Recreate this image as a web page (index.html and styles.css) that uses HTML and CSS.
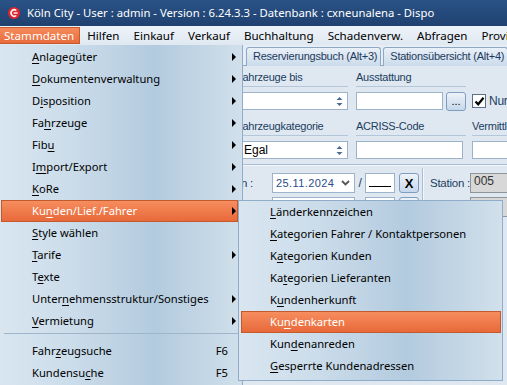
FILE: index.html
```html
<!DOCTYPE html>
<html lang="de">
<head>
    <meta charset="UTF-8">
    <meta name="viewport" content="width=device-width, initial-scale=1.0">
    <title>Köln City - Dispo</title>
    <link rel="stylesheet" href="styles.css">
</head>
<body>
    <div class="window">
        <div class="titlebar">
            <svg class="app-icon" width="12" height="12" viewBox="0 0 12 12">
                <circle cx="6" cy="6" r="6" fill="#e1242c"/>
                <path d="M8.3 3.5 A3.2 3.2 0 1 0 8.3 8.5" fill="none" stroke="#fff" stroke-width="1.5"/>
                <path d="M5.6 6 H9.6" stroke="#fff" stroke-width="1.4"/>
            </svg>
            <span>Köln City - User : admin - Version : 6.24.3.3 - Datenbank : cxneunalena - Dispo</span>
        </div>

        <div class="menubar">
            <span class="menubar-item open">Stammdaten</span>
            <span class="menubar-item">Hilfen</span>
            <span class="menubar-item">Einkauf</span>
            <span class="menubar-item">Verkauf</span>
            <span class="menubar-item">Buchhaltung</span>
            <span class="menubar-item">Schadenverw.</span>
            <span class="menubar-item">Abfragen</span>
            <span class="menubar-item">Provisionen</span>
        </div>

        <div class="workspace">
            <div class="tabstrip">
                <span class="tab">Reservierungsbuch (Alt+3)</span>
                <span class="tab">Stationsübersicht (Alt+4)</span>
            </div>

            <div class="panel">
                <div class="field-row">
                    <div class="field col-a">
                        <div class="caption">Fahrzeuge bis</div>
                        <div class="input select">
                            <span></span>
                            <svg class="spin" width="7" height="11" viewBox="0 0 7 11"><path d="M0.5 4 L3.5 1 L6.5 4 Z M0.5 7 L3.5 10 L6.5 7 Z" fill="#4d6b8c"/></svg>
                        </div>
                    </div>
                    <div class="field col-b">
                        <div class="caption">Ausstattung</div>
                        <div class="inline">
                            <div class="input w-88"></div>
                            <span class="btn dots">...</span>
                        </div>
                    </div>
                    <div class="field col-c">
                        <div class="caption no-line"></div>
                        <div class="check">
                            <span class="check-box">
                                <svg width="11" height="11" viewBox="0 0 11 11"><path d="M1.5 5.5 L4.2 8.3 L9.5 1.8" fill="none" stroke="#000" stroke-width="2.2"/></svg>
                            </span>
                            Nur verfügbare
                        </div>
                    </div>
                </div>

                <div class="field-row">
                    <div class="field col-a">
                        <div class="caption">Fahrzeugkategorie</div>
                        <div class="input select">
                            <span>Egal</span>
                            <svg class="spin" width="7" height="11" viewBox="0 0 7 11"><path d="M0.5 4 L3.5 1 L6.5 4 Z M0.5 7 L3.5 10 L6.5 7 Z" fill="#4d6b8c"/></svg>
                        </div>
                    </div>
                    <div class="field col-b">
                        <div class="caption">ACRISS-Code</div>
                        <div class="input w-107"></div>
                    </div>
                    <div class="field col-c">
                        <div class="caption">Vermittler</div>
                        <div class="input"></div>
                    </div>
                </div>

                <div class="divider"></div>

                <div class="date-block">
                    <div class="date-fields">
                        <div class="date-row">
                            <span class="date-label">Datum von :</span>
                            <div class="input date">
                                <span>25.11.2024</span>
                                <svg width="9" height="6" viewBox="0 0 9 6"><path d="M1 1 L4.5 4.5 L8 1" fill="none" stroke="#555" stroke-width="1.8"/></svg>
                            </div>
                            <span class="slash">/</span>
                            <div class="input time"><span class="blank-line"></span></div>
                            <span class="btn clear">X</span>
                        </div>
                        <div class="date-row">
                            <span class="date-label"></span>
                            <div class="input date"></div>
                            <span class="slash"></span>
                            <div class="input time"></div>
                            <span class="btn clear"></span>
                        </div>
                    </div>
                    <div class="vsep"></div>
                    <div class="station-fields">
                        <div class="date-row">
                            <span class="station-label">Station :</span>
                            <div class="input readonly">005</div>
                        </div>
                        <div class="date-row">
                            <span class="station-label"></span>
                            <div class="input readonly"></div>
                        </div>
                    </div>
                </div>
            </div>
        </div>

        <div class="menu main-menu">
            <div class="menu-item sub"><span class="label"><u>A</u>nlagegüter</span></div>
            <div class="menu-item sub"><span class="label"><u>D</u>okumentenverwaltung</span></div>
            <div class="menu-item sub"><span class="label">D<u>i</u>sposition</span></div>
            <div class="menu-item sub"><span class="label">Fa<u>h</u>rzeuge</span></div>
            <div class="menu-item sub"><span class="label">Fib<u>u</u></span></div>
            <div class="menu-item sub"><span class="label">I<u>m</u>port/Export</span></div>
            <div class="menu-item sub"><span class="label"><u>K</u>oRe</span></div>
            <div class="menu-item sub active"><span class="label">Ku<u>n</u>den/Lief./Fahrer</span></div>
            <div class="menu-item"><span class="label"><u>S</u>tyle wählen</span></div>
            <div class="menu-item sub"><span class="label"><u>T</u>arife</span></div>
            <div class="menu-item"><span class="label">T<u>e</u>xte</span></div>
            <div class="menu-item sub"><span class="label">Unter<u>n</u>ehmensstruktur/Sonstiges</span></div>
            <div class="menu-item sub"><span class="label"><u>V</u>ermietung</span></div>
            <div class="menu-sep"></div>
            <div class="menu-item"><span class="label">Fahr<u>z</u>eugsuche</span><span class="key">F6</span></div>
            <div class="menu-item"><span class="label">Kundensu<u>c</u>he</span><span class="key">F5</span></div>
        </div>

        <div class="menu sub-menu">
            <div class="menu-item"><span class="label"><u>L</u>änderkennzeichen</span></div>
            <div class="menu-item"><span class="label"><u>K</u>ategorien Fahrer / Kontaktpersonen</span></div>
            <div class="menu-item"><span class="label">K<u>a</u>tegorien Kunden</span></div>
            <div class="menu-item"><span class="label">Ka<u>t</u>egorien Lieferanten</span></div>
            <div class="menu-item"><span class="label">K<u>u</u>ndenherkunft</span></div>
            <div class="menu-item active"><span class="label">Ku<u>n</u>denkarten</span></div>
            <div class="menu-item"><span class="label">Kun<u>d</u>enanreden</span></div>
            <div class="menu-item"><span class="label"><u>G</u>esperrte Kundenadressen</span></div>
        </div>
    </div>
</body>
</html>
```

FILE: styles.css
```css
* {
    box-sizing: border-box;
}
body {
    margin: 0;
    font-family: "Noto Sans", "Open Sans", sans-serif;
    font-size: 12px;
    color: #000;
}
.window {
    position: relative;
    width: 507px;
    height: 385px;
    overflow: hidden;
    background: #dce6f0;
}

/* title + menu bar */
.titlebar {
    display: flex;
    align-items: center;
    gap: 7px;
    height: 26px;
    padding: 0 0 1px 8px;
    background: linear-gradient(#2a5386, #1f4170);
    color: #fff;
    font-size: 11.3px;
    white-space: nowrap;
}
.app-icon {
    flex: none;
}
.menubar {
    display: flex;
    height: 19px;
    margin-left: -3px;
    padding-top: 1px;
    background: linear-gradient(#eef3f9, #dfe8f1);
    font-size: 11.6px;
    white-space: nowrap;
}
.menubar-item {
    height: 17px;
    line-height: 15px;
    padding: 0 6px;
    border: 1px solid transparent;
}
.menubar-item.open {
    padding-right: 5px;
    background: linear-gradient(#f58b5c, #e96b3c);
    border-color: #c65a2c;
    color: #fff;
}

/* workspace behind the menus */
.workspace {
    font-family: "Liberation Sans", Arial, sans-serif;
    font-size: 11px;
    letter-spacing: -0.25px;
    color: #203d5e;
}
.tabstrip {
    display: flex;
    gap: 2px;
    height: 21px;
    padding: 2px 0 0 246px;
    background: #e6edf5;
    border-bottom: 1px solid #8ea8c3;
    white-space: nowrap;
}
.tab {
    flex: none;
    height: 19px;
    line-height: 17px;
    padding: 0 3px 0 6px;
    border: 1px solid #8ea8c3;
    border-bottom: none;
    border-radius: 3px 3px 0 0;
    background: linear-gradient(#e9f0f8, #cbdbeb);
    color: #1e3a5c;
}
.panel {
    padding: 4px 0 0 0;
    background: #dfe8f1;
    height: 400px;
}
.field-row {
    display: flex;
    padding-left: 236px;
    margin-bottom: 8px;
    white-space: nowrap;
}
.field {
    display: flex;
    flex: none;
    flex-direction: column;
    gap: 5px;
}
.col-a {
    width: 112px;
}
.col-b {
    width: 110px;
    margin-left: 8px;
}
.col-c {
    width: 120px;
    margin-left: 6px;
}
.caption {
    height: 17px;
    line-height: 14px;
    padding-bottom: 2px;
    border-bottom: 1px solid #b3c7da;
}
.caption.no-line {
    border-bottom-color: transparent;
}
.input {
    height: 18px;
    background: #fff;
    border: 1px solid #9db3c9;
    color: #000;
    font-size: 12px;
    letter-spacing: 0;
    line-height: 16px;
    padding: 0 3px;
}
.select {
    display: flex;
    align-items: center;
    justify-content: space-between;
    padding: 0 4px 0 7px;
}
.inline {
    display: flex;
    gap: 3px;
}
.w-88 {
    width: 88px;
}
.w-107 {
    width: 107px;
}
.btn {
    display: flex;
    align-items: center;
    justify-content: center;
    border: 1px solid #7f9dbf;
    border-radius: 3px;
    background: linear-gradient(#edf3fa, #c6d7ea);
    color: #000;
    letter-spacing: 0;
}
.dots {
    width: 20px;
    height: 19px;
    font-size: 11px;
    line-height: 13px;
}
.check {
    display: flex;
    align-items: center;
    gap: 3px;
    height: 18px;
    font-size: 12px;
}
.check-box {
    display: flex;
    align-items: center;
    justify-content: center;
    width: 14px;
    height: 14px;
    background: #fff;
    border: 1px solid #5c6f84;
}
.divider {
    height: 2px;
    margin-top: -3px;
    border-top: 1px solid #a9bed3;
    border-bottom: 1px solid #f3f7fb;
}
.date-block {
    display: flex;
    margin-top: 2px;
    white-space: nowrap;
}
.date-fields,
.station-fields {
    display: flex;
    flex-direction: column;
    gap: 4px;
    padding-top: 5px;
}
.date-row {
    display: flex;
    align-items: center;
    height: 20px;
}
.date-label {
    width: 253px;
    text-align: right;
    font-size: 11.5px;
}
.input.date {
    display: flex;
    align-items: center;
    justify-content: space-between;
    width: 83px;
    height: 20px;
    margin-left: 19px;
    color: #2b4c8c;
    font-size: 11px;
    letter-spacing: 0.4px;
    padding-right: 4px;
}
.slash {
    width: 10px;
    text-align: center;
    font-size: 12px;
}
.input.time {
    width: 30px;
    height: 20px;
    padding: 0 3px;
}
.blank-line {
    display: block;
    height: 13px;
    border-bottom: 1px solid #000;
}
.clear {
    width: 20px;
    height: 20px;
    margin-left: 4px;
    font-size: 13px;
    font-weight: bold;
}
.vsep {
    width: 2px;
    margin-left: 3px;
    border-left: 1px solid #a9bed3;
    border-right: 1px solid #f3f7fb;
}
.station-label {
    margin-left: 6px;
    width: 40px;
    font-size: 11.5px;
}
.input.readonly {
    width: 70px;
    height: 20px;
    background: #d8d8d8;
    border-color: #8f9499;
    color: #333;
    line-height: 14px;
}

/* drop-down menus */
.menu {
    position: absolute;
    background: linear-gradient(90deg, #d9e6f0 0%, #cbdcea 30%, #b3cbdf 64%, #c3d6e5 84%, #d1e0eb 100%);
    font-size: 11.2px;
    white-space: nowrap;
}
.main-menu {
    left: 0;
    top: 45px;
    width: 243px;
    height: 350px;
    padding-top: 1px;
    border-right: 1px solid #8fadc9;
}
.sub-menu {
    left: 238px;
    top: 200px;
    width: 265px;
    padding-bottom: 3px;
    border: 1px solid #8fadc9;
}
.menu-item {
    display: flex;
    align-items: center;
    height: 22px;
    margin: 0 4px 0 1px;
    padding: 0 1px 2px 30px;
    border: 1px solid transparent;
}
.sub-menu .menu-item {
    margin: 0 1px 0 2px;
    padding-left: 28px;
}
.menu-item .label {
    flex: 1;
}
.menu-item .key {
    margin-right: 8px;
}
.menu-item.sub::after {
    content: "";
    margin-top: 2px;
    border-left: 4px solid #000;
    border-top: 4px solid transparent;
    border-bottom: 4px solid transparent;
}
.menu-item.active {
    background: linear-gradient(#f68d5e, #e8693a);
    border-color: #c25a2d;
    color: #fff;
}
.menu-sep {
    height: 7px;
    margin: 1px 0 0 4px;
    border-top: 1px solid #9db6cc;
}
u {
    text-decoration-thickness: 1px;
    text-underline-offset: 2px;
}
```
